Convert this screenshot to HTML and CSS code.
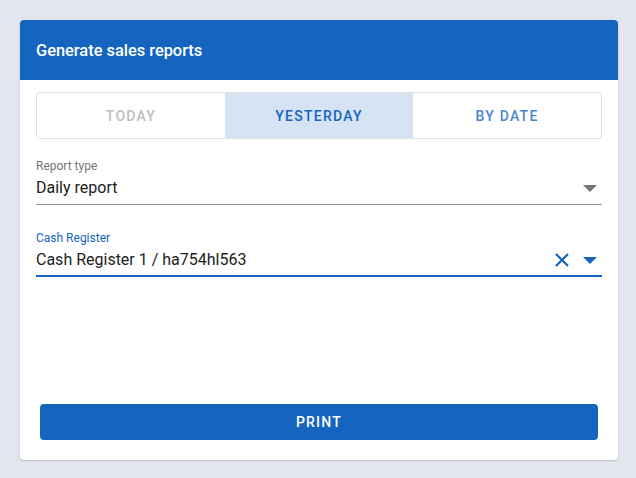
FILE: index.html
```html
<!DOCTYPE html>
<html lang="en">
<head>
<meta charset="utf-8">
<title>Generate sales reports</title>
<link rel="stylesheet" href="styles.css">
</head>
<body>
<div class="card">
  <div class="card-header">Generate sales reports</div>
  <div class="card-body">
    <div class="tabs">
      <div class="tab tab-disabled">Today</div>
      <div class="tab tab-active">Yesterday</div>
      <div class="tab">By date</div>
    </div>
    <div class="field field-first">
      <div class="field-label">Report type</div>
      <div class="field-row">
        <div class="field-value">Daily report</div>
        <svg class="arrow" width="14" height="7" viewBox="0 0 14 7"><path d="M0 0h14L7 7z" fill="#757575"/></svg>
      </div>
    </div>
    <div class="field field-focused">
      <div class="field-label">Cash Register</div>
      <div class="field-row">
        <div class="field-value">Cash Register 1 / ha754hl563</div>
        <svg class="clear" width="14" height="14" viewBox="0 0 14 14"><path d="M1 1L13 13M13 1L1 13" stroke="#1565c0" stroke-width="2.2" fill="none"/></svg>
        <svg class="arrow" width="14" height="7" viewBox="0 0 14 7"><path d="M0 0h14L7 7z" fill="#1565c0"/></svg>
      </div>
    </div>
    <button class="print-btn">Print</button>
  </div>
</div>
</body>
</html>
```
FILE: styles.css
```css
html, body {
  margin: 0;
  padding: 0;
}
body {
  background: #e3e6ee;
  font-family: Roboto, "Liberation Sans", Arial, sans-serif;
  padding: 20px 18px 18px 20px;
}
.card {
  width: 598px;
  height: 440px;
  background: #ffffff;
  border-radius: 4px;
  box-shadow: 0 1px 2px rgba(60, 70, 110, 0.25);
  overflow: hidden;
  display: flex;
  flex-direction: column;
}
.card-header {
  height: 60px;
  flex: none;
  background: #1565c0;
  color: #ffffff;
  font-size: 16.4px;
  font-weight: 500;
  display: flex;
  align-items: center;
  padding-left: 16px;
  padding-top: 1px;
  box-sizing: border-box;
}
.card-body {
  flex: 1;
  display: flex;
  flex-direction: column;
  padding: 12px 16px 20px 16px;
}
.tabs {
  display: flex;
  height: 47px;
  box-sizing: border-box;
  border: 1px solid #e0e0e0;
  border-radius: 4px;
  overflow: hidden;
}
.tab {
  flex: 1;
  display: flex;
  align-items: center;
  justify-content: center;
  font-size: 14px;
  font-weight: 500;
  letter-spacing: 1.25px;
  text-transform: uppercase;
  color: #4a85d0;
}
.tab-disabled {
  color: #bdbdbd;
}
.tab-active {
  background: #d6e3f4;
  color: #1565c0;
}
.field {
  display: flex;
  flex-direction: column;
  border-bottom: 1px solid #949494;
  padding-bottom: 4px;
}
.field-first {
  margin-top: 19px;
}
.field-focused {
  margin-top: 25px;
  border-bottom: 2px solid #1565c0;
  padding-bottom: 3px;
}
.field-label {
  font-size: 12px;
  line-height: 16px;
  color: #757575;
}
.field-focused .field-label {
  color: #1565c0;
}
.field-row {
  display: flex;
  align-items: center;
  margin-top: 2px;
  height: 24px;
}
.field-value {
  flex: 1;
  font-size: 16px;
  line-height: 24px;
  color: #212121;
}
.arrow {
  margin-right: 5px;
  margin-left: 0;
}
.clear {
  margin-right: 14px;
}
.print-btn {
  margin-top: auto;
  margin-left: 4px;
  margin-right: 4px;
  height: 36px;
  border: none;
  border-radius: 4px;
  background: #1565c0;
  color: #ffffff;
  font-family: Roboto, "Liberation Sans", Arial, sans-serif;
  font-size: 14px;
  font-weight: 500;
  letter-spacing: 1.25px;
  text-transform: uppercase;
}
```
